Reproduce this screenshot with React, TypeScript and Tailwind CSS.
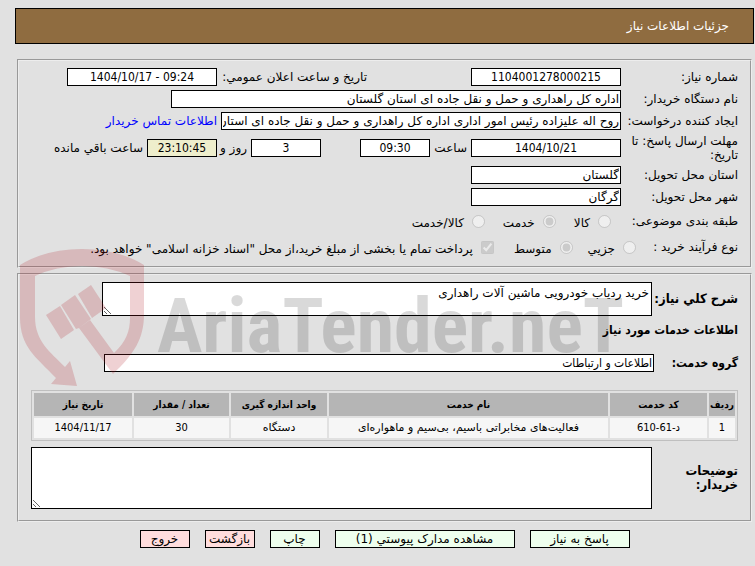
import type { ReactNode } from "react";

const fieldBase =
  "h-[18px] max-w-full shrink-0 border border-black px-px text-[12px] leading-4 text-black outline-none";

const numeric = "text-center font-['DejaVu_Sans_Condensed','DejaVu_Sans',sans-serif]";

const condensed = "font-['DejaVu_Sans_Condensed','DejaVu_Sans',sans-serif]";

type FieldProps = {
  id: string;
  value: string;
  className: string;
  label?: string;
};

function Field({ id, value, className, label }: FieldProps) {
  return (
    <input
      id={id}
      type="text"
      readOnly
      aria-label={label}
      defaultValue={value}
      className={`${fieldBase} ${className}`}
    />
  );
}

type RowProps = {
  label: string;
  htmlFor?: string;
  className?: string;
  children: ReactNode;
};

function Row({ label, htmlFor, className = "", children }: RowProps) {
  return (
    <div className={`flex items-center ${className}`}>
      <label htmlFor={htmlFor} className="w-[117px] shrink-0 leading-[14px]">
        {label}
      </label>
      {children}
    </div>
  );
}

type ChoiceProps = {
  name: string;
  label: string;
  checked?: boolean;
  className?: string;
};

function Choice({ name, label, checked, className = "" }: ChoiceProps) {
  return (
    <label className={`flex shrink-0 items-center gap-2 ${className}`}>
      <input type="radio" name={name} disabled defaultChecked={checked} className="h-[13px] w-[13px]" />
      <span className="pt-1">{label}</span>
    </label>
  );
}

function Watermark() {
  return (
    <div
      aria-hidden="true"
      dir="ltr"
      className="pointer-events-none absolute top-[-27px] right-[126px] flex items-start"
    >
      <svg width="126" height="140" viewBox="19 249 126 140" className="shrink-0" fill="#af1923" fillOpacity="0.2">
        <path d="M20 266Q46 250 82 250Q118 250 144 266V315C144 340 134 355 113 375L79 329L90 321L114 354C126 343 130 332 130 319V277Q108 267 82 267Q56 267 35 277V318C35 342 50 353 65 368L70 362L77 387L51 385L56 379C36 358 20 348 20 318Z" />
        <path d="M46 316L60 307L74 331L61 340Z" />
        <path d="M61 306L75 296L91 320L79 329L76 330Z" />
        <path d="M78 295L91 286L106 309L92 319Z" />
      </svg>
      <span className="mt-7 ml-3 font-['Liberation_Sans_Narrow','Roboto_Condensed','DejaVu_Sans_Condensed',sans-serif] text-[76px] leading-[100px] font-bold whitespace-nowrap text-black/15">
        AriaTender.neT
      </span>
    </div>
  );
}

const columns = ["ردیف", "کد خدمت", "نام خدمت", "واحد اندازه گیری", "تعداد / مقدار", "تاریخ نیاز"];

const services = [
  {
    row: "1",
    code: "د-61-610",
    name: "فعالیت‌های مخابراتی باسیم، بی‌سیم و ماهواره‌ای",
    unit: "دستگاه",
    count: "30",
    date: "1404/11/17",
  },
];

const actions = [
  { title: "پاسخ به نیاز", style: "w-[100px] bg-[#eeffee]" },
  { title: "مشاهده مدارک پیوستي (1)", style: "w-[180px] bg-[#eeffee]" },
  { title: "چاپ", style: "w-[50px] bg-[#eeffee]" },
  { title: "بازگشت", style: "w-[50px] bg-[#ffdddd]" },
  { title: "خروج", style: "w-[50px] bg-[#ffdddd]" },
];

const panel = "min-w-0 border-2 border-[#ededed] [border-style:groove] px-3 pt-[7px]";
const cell = "bg-[#f6f6f6] p-0";

export default function App() {
  return (
    <div
      dir="rtl"
      className="min-h-screen bg-[#e1e1e1] pt-2 pr-px pb-4 pl-[15px] font-['DejaVu_Sans',sans-serif] text-[12px] leading-[14px] text-black"
    >
      <header className="flex h-9 items-center border border-black bg-[#8f6c40] px-6 text-white">
        <h1>جزئیات اطلاعات نیاز</h1>
      </header>

      <main className="mt-[15px] mr-[2px] ml-[2px] flex flex-col gap-[5px]">
        <fieldset className={`${panel} flex flex-col gap-1 pb-2`}>
          <Row label="شماره نیاز:" htmlFor="number">
            <Field id="number" value="1104001278000215" className={`w-[150px] bg-white ${numeric}`} />
            <label htmlFor="announce" className="mr-[104px] w-[150px] shrink-0">
              تاریخ و ساعت اعلان عمومي:
            </label>
            <Field
              id="announce"
              value="1404/10/17 - 09:24"
              className={`w-[150px] bg-white [direction:ltr] ${numeric}`}
            />
          </Row>
          <Row label="نام دستگاه خریدار:" htmlFor="buyer">
            <Field id="buyer" value="اداره کل راهداری و حمل و نقل جاده ای استان گلستان" className="w-[450px] bg-white" />
          </Row>
          <Row label="ایجاد کننده درخواست:" htmlFor="creator">
            <Field
              id="creator"
              value="روح اله علیزاده رئیس امور اداری اداره کل راهداری و حمل و نقل جاده ای استان گلستان"
              className="w-[400px] bg-white"
            />
            <a href="#contact" className="mr-1 shrink-0 text-[#0000ff]">
              اطلاعات تماس خریدار
            </a>
          </Row>
          <Row label="مهلت ارسال پاسخ: تا تاریخ:" htmlFor="deadline">
            <Field id="deadline" value="1404/10/21" className={`w-[150px] bg-white ${numeric}`} />
            <label htmlFor="hour" className="mr-1 w-[37px] shrink-0">
              ساعت
            </label>
            <Field id="hour" value="09:30" className={`w-[70px] bg-white ${numeric}`} />
            <Field id="days" label="روز" value="3" className={`mr-[39px] w-[70px] bg-white ${numeric}`} />
            <label htmlFor="days" className="mr-1 w-[30px] shrink-0">
              روز و
            </label>
            <Field id="remaining" value="23:10:45" className={`w-[70px] bg-[#eeeecc] ${numeric}`} />
            <label htmlFor="remaining" className="mr-1 shrink-0">
              ساعت باقي مانده
            </label>
          </Row>
          <Row label="استان محل تحویل:" htmlFor="province">
            <Field id="province" value="گلستان" className="w-[150px] bg-white" />
          </Row>
          <Row label="شهر محل تحویل:" htmlFor="city">
            <Field id="city" value="گرگان" className="w-[150px] bg-white" />
          </Row>
          <Row label="طبقه بندی موضوعی:" className="h-[22px]">
            <Choice name="subject" label="کالا" className="mr-[10px]" />
            <Choice name="subject" label="خدمت" checked className="mr-[18px]" />
            <Choice name="subject" label="کالا/خدمت" className="mr-[18px]" />
          </Row>
          <div className="flex h-[22px] items-center">
            <span className="w-[102px] shrink-0">نوع فرآیند خرید :</span>
            <Choice name="process" label="جزیي" />
            <Choice name="process" label="متوسط" checked className="mr-[15px]" />
            <label className="mr-5 flex shrink-0 items-center gap-2">
              <input type="checkbox" disabled defaultChecked className="h-[13px] w-[13px]" />
              <span className="pt-1 whitespace-nowrap">
                پرداخت تمام یا بخشی از مبلغ خرید،از محل "اسناد خزانه اسلامی" خواهد بود.
              </span>
            </label>
          </div>
        </fieldset>

        <fieldset className={`${panel} relative pb-[11px]`}>
          <div className="flex items-center">
            <label htmlFor="summary" className={`w-[86px] shrink-0 text-[13px] font-bold whitespace-nowrap ${condensed}`}>
              شرح کلي نیاز:
            </label>
            <textarea
              id="summary"
              readOnly
              defaultValue="خرید ردیاب خودرویی ماشین آلات راهداری"
              className="block h-[34px] w-[550px] resize border border-black bg-white px-[2px] py-[3px] text-[12px] leading-[14px] outline-none"
            />
          </div>
          <h2 className={`mt-[7px] font-bold ${condensed}`}>اطلاعات خدمات مورد نیاز</h2>
          <div className="mt-[17px] flex items-center">
            <label htmlFor="group" className={`w-[84px] shrink-0 text-[12px] font-bold ${condensed}`}>
              گروه خدمت:
            </label>
            <Field id="group" value="اطلاعات و ارتباطات" className={`w-[550px] bg-white ${condensed}`} />
          </div>

          <table className="mt-[18px] w-full table-fixed border-separate border-spacing-[2px] border border-[#bfbfbf] text-center text-[11px] leading-[14px]">
            <colgroup>
              <col className="w-[26px]" />
              <col className="w-[97px]" />
              <col />
              <col className="w-[96px]" />
              <col className="w-[95px]" />
              <col className="w-[98px]" />
            </colgroup>
            <thead>
              <tr className="h-[23px]">
                {columns.map((title) => (
                  <th key={title} className={`bg-[#b5b5b5] p-0 text-[10px] font-bold whitespace-nowrap ${condensed}`}>
                    {title}
                  </th>
                ))}
              </tr>
            </thead>
            <tbody>
              {services.map((service) => (
                <tr key={service.row} className="h-5">
                  <td className={`${cell} ${condensed}`}>{service.row}</td>
                  <td className={`${cell} ${condensed}`}>{service.code}</td>
                  <td className={cell}>{service.name}</td>
                  <td className={cell}>{service.unit}</td>
                  <td className={`${cell} ${condensed}`}>{service.count}</td>
                  <td className={`${cell} ${condensed}`}>{service.date}</td>
                </tr>
              ))}
            </tbody>
          </table>

          <div className="mt-[6px] flex items-center">
            <label htmlFor="notes" className={`w-[86px] shrink-0 pl-6 text-[13px] font-bold ${condensed}`}>
              توضیحات خریدار:
            </label>
            <textarea
              id="notes"
              readOnly
              className="block h-[62px] min-w-0 grow resize border border-black bg-white p-[2px] text-[12px] outline-none"
            />
          </div>
          <Watermark />
        </fieldset>
      </main>

      <footer className="mt-2 flex justify-center gap-[15px]">
        {actions.map((action) => (
          <button
            key={action.title}
            type="button"
            className={`flex h-[18px] items-center justify-center border border-black whitespace-nowrap ${action.style}`}
          >
            {action.title}
          </button>
        ))}
      </footer>
    </div>
  );
}
